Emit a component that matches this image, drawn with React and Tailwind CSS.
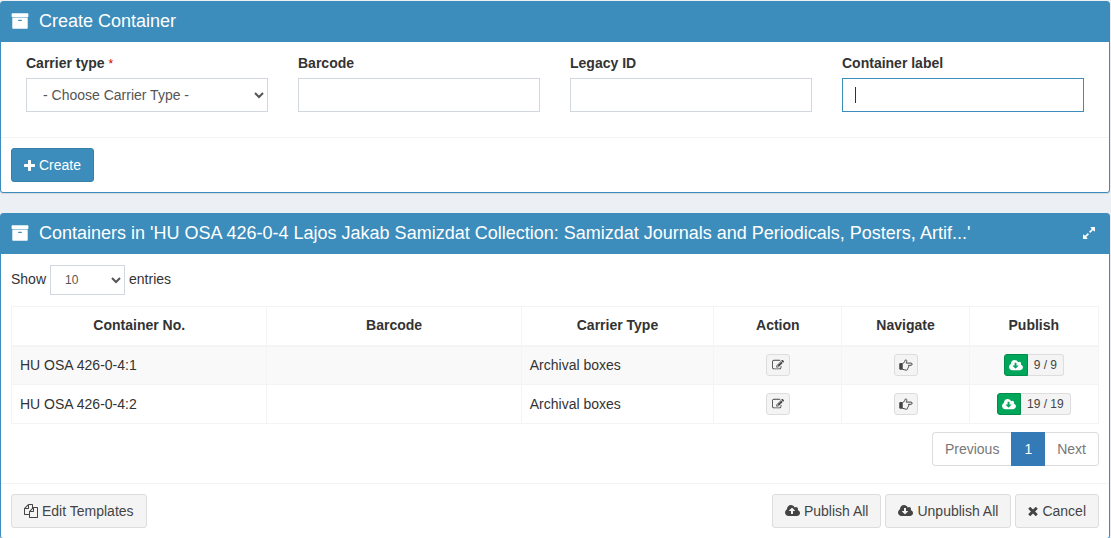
import React from "react";
import clsx from "clsx";

const GLYPHS = {
  archive:
    "M1088 832q0-26-19-45t-45-19h-256q-26 0-45 19t-19 45 19 45 45 19h256q26 0 45-19t19-45zm576-192v960q0 26-19 45t-45 19h-1408q-26 0-45-19t-19-45v-960q0-26 19-45t45-19h1408q26 0 45 19t19 45zm64-448v256q0 26-19 45t-45 19h-1536q-26 0-45-19t-19-45v-256q0-26 19-45t45-19h1536q26 0 45 19t19 45z",
  plus: "M1600 736v192q0 40-28 68t-68 28h-416v416q0 40-28 68t-68 28h-192q-40 0-68-28t-28-68v-416h-416q-40 0-68-28t-28-68v-192q0-40 28-68t68-28h416v-416q0-40 28-68t68-28h192q40 0 68 28t28 68v416h416q40 0 68 28t28 68z",
  times:
    "M1490 1322q0 40-28 68l-136 136q-28 28-68 28t-68-28l-294-294-294 294q-28 28-68 28t-68-28l-136-136q-28-28-28-68t28-68l294-294-294-294q-28-28-28-68t28-68l136-136q28-28 68-28t68 28l294 294 294-294q28-28 68-28t68 28l136 136q28 28 28 68t-28 68l-294 294 294 294q28 28 28 68z",
  files:
    "M1696 384q40 0 68 28t28 68v1216q0 40-28 68t-68 28h-960q-40 0-68-28t-28-68v-288h-544q-40 0-68-28t-28-68v-672q0-40 20-88t48-76l408-408q28-28 76-48t88-20h416q40 0 68 28t28 68v328q68-40 128-40h416zm-544 213l-299 299h299v-299zm-640-384l-299 299h299v-299zm196 647l316-316v-416h-384v416q0 40-28 68t-68 28h-416v640h512v-256q0-40 20-88t48-76zm956 804v-1152h-384v416q0 40-28 68t-68 28h-416v640h896z",
  edit: "M888 1184l116-116-152-152-116 116v56h96v96h56zm440-720q-16-16-33 1l-350 350q-17 17-1 33t33-1l350-350q17-17 1-33zm80 594v190q0 119-84.5 203.5t-203.5 84.5h-832q-119 0-203.5-84.5t-84.5-203.5v-832q0-119 84.5-203.5t203.5-84.5h832q63 0 117 25 15 7 18 23 3 17-9 29l-49 49q-14 14-32 8-23-6-45-6h-832q-66 0-113 47t-47 113v832q0 66 47 113t113 47h832q66 0 113-47t47-113v-126q0-13 9-22l64-64q15-15 35-7t20 29zm-96-738l288 288-672 672h-288v-288zm444 132l-92 92-288-288 92-92q28-28 68-28t68 28l152 152q28 28 28 68t-28 68z",
  expand:
    "M883 1056q0 13-10 23l-332 332 144 144q19 19 19 45t-19 45-45 19h-448q-26 0-45-19t-19-45v-448q0-26 19-45t45-19 45 19l144 144 332-332q10-10 23-10t23 10l114 114q10 10 10 23zm781-864v448q0 26-19 45t-45 19-45-19l-144-144-332 332q-10 10-23 10t-23-10l-114-114q-10-10-10-23t10-23l332-332-144-144q-19-19-19-45t19-45 45-19h448q26 0 45 19t19 45z",
};

const CLOUD =
  "m640 224q0 159-112.5 271.5t-271.5 112.5h-1088q-185 0-316.5-131.5t-131.5-316.5q0-130 70-240t188-165q-2-30-2-43 0-212 150-362t362-150q156 0 285.5 87t188.5 231q71-62 166-62 106 0 181 75t75 181q0 76-41 138 130 31 213.5 135.5t83.5 238.5z";
const DOWN =
  "M1216 928q0-14-9-23t-23-9h-224v-352q0-13-9.5-22.5t-22.5-9.5h-192q-13 0-22.5 9.5t-9.5 22.5v352h-224q-13 0-22.5 9.5t-9.5 22.5q0 14 9 23l352 352q9 9 23 9t23-9l351-351q10-12 10-24z";
const UP =
  "M1216 864q0-14-9-23l-352-352q-9-9-23-9t-23 9l-351 351q-10 12-10 24 0 14 9 23t23 9h224v352q0 13 9.5 22.5t22.5 9.5h192q13 0 22.5-9.5t9.5-22.5v-352h224q13 0 22.5-9.5t9.5-22.5z";

function Icon({ name, box = "0 0 1792 1792", className }) {
  return (
    <svg viewBox={box} fill="currentColor" aria-hidden="true" className={clsx("shrink-0", className)}>
      <path d={GLYPHS[name]} />
    </svg>
  );
}

function Cloud({ up, className }) {
  return (
    <svg viewBox="-64 0 1920 1792" fill="currentColor" aria-hidden="true" className={clsx("shrink-0", className)}>
      <path d={up ? UP + CLOUD.replace("m640 224", "m640 288") : DOWN + CLOUD} />
    </svg>
  );
}

function Hand({ className }) {
  return (
    <svg
      viewBox="0 0 14 12"
      fill="none"
      stroke="currentColor"
      strokeWidth="1"
      strokeLinejoin="round"
      aria-hidden="true"
      className={clsx("shrink-0", className)}
    >
      <path d="M.8 4.6H3.2V10.2H.8z" fill="currentColor" />
      <path d="M3.2 4.9C4.4 4.6 5.2 3.4 5.6 2.6C6 1.8 6 .9 6.7 .9C7.6 .9 7.9 1.6 7.8 2.3C7.7 3.1 7.2 3.7 7.2 4.1H12C12.7 4.1 13.2 4.6 13.2 5.2S12.7 6.3 12 6.3H9.5C9.9 7 9.8 7.7 9.3 8.1C9.5 8.7 9.2 9.3 8.7 9.6C8.8 10.6 8.2 11.2 7.2 11.2C5.6 11.2 4.7 10.2 3.2 10.2" />
    </svg>
  );
}

const INPUT =
  "h-[34px] w-full border border-[#d2d6de] bg-white px-3 text-sm text-[#555] outline-none focus:border-[#3c8dbc]";
const BTN =
  "flex h-[34px] cursor-pointer items-center gap-1 rounded-[3px] border border-[#ddd] bg-[#f4f4f4] px-3 text-sm text-[#444]";
const TINY = "flex h-[22px] cursor-pointer items-center border border-[#ddd] bg-[#f4f4f4] text-xs text-[#444]";

function Panel({ title, tool, children, footer }) {
  return (
    <section className="rounded-[3px] border border-[#3c8dbc] bg-white shadow-[0_1px_1px_rgba(0,0,0,0.1)]">
      <header className="flex h-10 items-center gap-2.5 bg-[#3c8dbc] px-2.5 pb-0.5 text-white">
        <Icon name="archive" className="size-[18px]" />
        <h3 className="min-w-0 flex-1 truncate text-lg leading-5">{title}</h3>
        {tool}
      </header>
      {children}
      <footer className="flex items-center justify-between border-t border-[#f4f4f4] p-2.5">{footer}</footer>
    </section>
  );
}

function Field({ id, label, required, children }) {
  return (
    <div className="flex flex-col gap-[5px]">
      <label htmlFor={id} className="text-sm leading-5 font-bold">
        {label}
        {required && (
          <>
            {" "}
            <span className="text-xs font-normal text-[#c00]">*</span>
          </>
        )}
      </label>
      {children}
    </div>
  );
}

const COLUMNS = [
  ["Container No.", "w-[23.5%]"],
  ["Barcode", "w-[23.4%]"],
  ["Carrier Type", "w-[17.7%]"],
  ["Action", "w-[11.8%]"],
  ["Navigate", "w-[11.7%]"],
  ["Publish", "w-[11.9%]"],
];

const ROWS = [
  { no: "HU OSA 426-0-4:1", barcode: "", type: "Archival boxes", published: "9 / 9" },
  { no: "HU OSA 426-0-4:2", barcode: "", type: "Archival boxes", published: "19 / 19" },
];

const CELL = "border border-[#f4f4f4] px-2";

export default function App() {
  return (
    <main className="flex flex-col gap-5 overflow-hidden bg-[#ecf0f5] pt-px pr-px font-['Liberation_Sans',Arial,sans-serif] text-sm text-[#333]">
      <Panel
        title="Create Container"
        footer={
          <button
            type="submit"
            className="flex h-[34px] cursor-pointer items-center gap-1 rounded-[3px] border border-[#367fa9] bg-[#3c8dbc] px-3 text-sm text-white"
          >
            <Icon name="plus" box="192 128 1408 1408" className="size-[11px]" />
            Create
          </button>
        }
      >
        <div className="grid grid-cols-4 gap-[30px] px-[25px] pt-[11px] pb-[25px]">
          <Field id="carrier" label="Carrier type" required>
            <select id="carrier" className={INPUT}>
              <option>- Choose Carrier Type -</option>
            </select>
          </Field>
          <Field id="barcode" label="Barcode">
            <input id="barcode" type="text" className={INPUT} />
          </Field>
          <Field id="legacy" label="Legacy ID">
            <input id="legacy" type="text" className={INPUT} />
          </Field>
          <Field id="label" label="Container label">
            <div className="relative">
              <input
                id="label"
                type="text"
                placeholder=" "
                autoFocus
                className={clsx(INPUT, "peer placeholder-shown:caret-transparent")}
              />
              <span
                aria-hidden="true"
                className="pointer-events-none absolute inset-y-[9px] left-[13px] hidden w-px bg-[#333] peer-focus:peer-placeholder-shown:block"
              />
            </div>
          </Field>
        </div>
      </Panel>

      <Panel
        title="Containers in 'HU OSA 426-0-4 Lajos Jakab Samizdat Collection: Samizdat Journals and Periodicals, Posters, Artif...'"
        tool={
          <button type="button" aria-label="Expand" className="mr-[3px] cursor-pointer">
            <Icon name="expand" className="size-3.5" />
          </button>
        }
        footer={
          <>
            <button type="button" className={BTN}>
              <Icon name="files" className="size-3.5" />
              Edit Templates
            </button>
            <div className="flex gap-1">
              <button type="button" className={BTN}>
                <Cloud up className="h-3.5 w-[15px]" />
                Publish All
              </button>
              <button type="button" className={BTN}>
                <Cloud className="h-3.5 w-[15px]" />
                Unpublish All
              </button>
              <button type="button" className={BTN}>
                <Icon name="times" box="246 246 1300 1300" className="size-2.5" />
                Cancel
              </button>
            </div>
          </>
        }
      >
        <div className="px-2.5 pt-[11px] pb-[17px]">
          <div className="flex items-start gap-1 leading-7">
            <label htmlFor="entries">Show</label>
            <select
              id="entries"
              className="h-[30px] w-[75px] border border-[#d2d6de] bg-white px-2.5 text-xs text-[#555] outline-none"
            >
              <option>10</option>
            </select>
            <span>entries</span>
          </div>
          <table className="mt-[11px] w-full table-fixed border-collapse border border-[#f4f4f4]">
            <thead>
              <tr className="h-[39px]">
                {COLUMNS.map(([name, width]) => (
                  <th key={name} className={clsx(CELL, width, "border-b-2 pb-0.5 text-center font-bold")}>
                    {name}
                  </th>
                ))}
              </tr>
            </thead>
            <tbody>
              {ROWS.map((row) => (
                <tr key={row.no} className="h-[39px] odd:bg-[#f9f9f9]">
                  <td className={CELL}>{row.no}</td>
                  <td className={CELL}>{row.barcode}</td>
                  <td className={CELL}>{row.type}</td>
                  <td className={CELL}>
                    <button type="button" aria-label="Edit" className={clsx(TINY, "mx-auto rounded-[3px] px-[5px]")}>
                      <Icon name="edit" className="size-3" />
                    </button>
                  </td>
                  <td className={CELL}>
                    <button type="button" aria-label="Open" className={clsx(TINY, "mx-auto rounded-[3px] px-1")}>
                      <Hand className="h-3 w-3.5" />
                    </button>
                  </td>
                  <td className={CELL}>
                    <div className="flex justify-center">
                      <button
                        type="button"
                        aria-label="Unpublish"
                        className="flex h-[22px] cursor-pointer items-center rounded-l-[3px] border border-[#008d4c] bg-[#00a65a] px-1 text-white"
                      >
                        <Cloud className="h-[13px] w-3.5" />
                      </button>
                      <button type="button" className={clsx(TINY, "rounded-r-[3px] border-l-0 px-1.5")}>
                        {row.published}
                      </button>
                    </div>
                  </td>
                </tr>
              ))}
            </tbody>
          </table>
          <nav aria-label="Pages" className="mt-2 flex justify-end leading-5">
            <a href="#previous" className="rounded-l-[4px] border border-r-0 border-[#ddd] px-3 py-1.5 text-[#777]">
              Previous
            </a>
            <a href="#1" aria-current="page" className="border border-[#337ab7] bg-[#337ab7] px-3 py-1.5 text-white">
              1
            </a>
            <a href="#next" className="rounded-r-[4px] border border-l-0 border-[#ddd] px-3 py-1.5 text-[#777]">
              Next
            </a>
          </nav>
        </div>
      </Panel>
    </main>
  );
}
